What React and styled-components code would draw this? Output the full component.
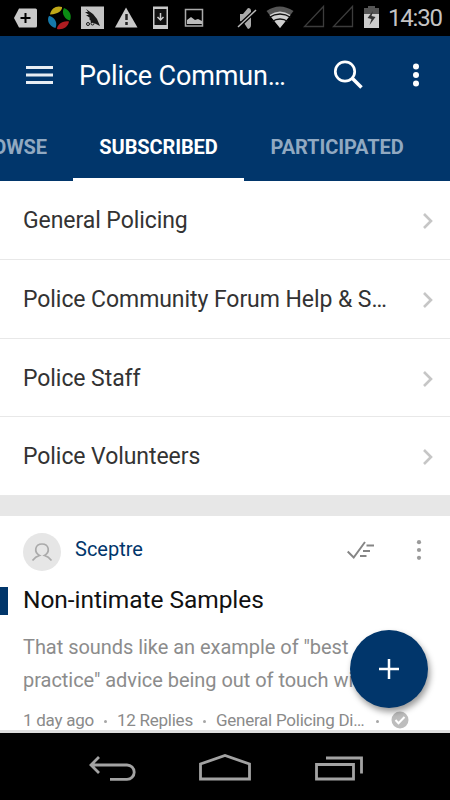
import React from "react"
import styled, { createGlobalStyle } from "styled-components"

const forums = [
  "General Policing",
  "Police Community Forum Help & S…",
  "Police Staff",
  "Police Volunteers",
]

function StatusIcons() {
  return (
    <svg width="386" height="36" viewBox="0 0 386 36">
      <path d="M19 8.500h16.500q1.500 0 1.500 1.500v16q0 1.500-1.500 1.500H19l-5-9.500z" fill="#c9c9c9" />
      <path d="M20.500 18h10M25.500 13v10" stroke="#000" strokeWidth="2" />
      <path d="M50 14.500C51 8 57 5 62 7C62.500 10 59 14 50 14.500z" fill="#c0a818" />
      <path d="M64 8C70 10 72 16 70 20.500C66 20 60.500 14 64 8z" fill="#0c8c14" />
      <path d="M69 21.500C68 27 63 30 57 29C57 25 62 20.500 69 21.500z" fill="#ae1c20" />
      <path d="M55.500 28C49 26.500 46.500 20 49 16C52.500 16 58.500 21 55.500 28z" fill="#1679aa" />
      <path d="M81 6.500h23v22.500H81z" fill="#c4c4c4" />
      <path
        d="M86 9l7 5 4 5 3 7-6-3-5-4 1-1-4-3 3 0-4-3 3 0zM90 18l6 4-5 1z"
        fill="#181818"
      />
      <g fill="none" stroke="#181818">
        <circle cx="88" cy="24" r="1.500" />
        <circle cx="92.500" cy="23.500" r="1.500" />
      </g>
      <path d="M126 7.500L137.500 27.500H115z" fill="#c9c9c9" />
      <path d="M126.500 14v6M126.500 22v3" stroke="#222" strokeWidth="2.500" />
      <path d="M153 6.500h15v22.500h-15z" fill="#c9c9c9" />
      <path d="M154.500 9h12v16h-12z" fill="#111" />
      <path d="M160.500 13v7M157.500 17l3 3 3-3" stroke="#ccc" strokeWidth="1.500" fill="none" />
      <path d="M185.500 9.500h17v16.500h-17z" fill="none" stroke="#aaa" strokeWidth="1.500" />
      <path d="M187 24v-4l4-3 4 3 3-1 4 2v3z" fill="#bbb" />
      <path d="M240 14h3l5-6q3 0 3 3v14q0 3-3 4l-4-6-4-2z" fill="#aaa" />
      <path d="M238 27l18-17" stroke="#000" strokeWidth="4" />
      <path d="M238 27l18-17" stroke="#bbb" strokeWidth="1.500" />
      <path d="M266.500 11q13-9 27 0l-13.500 17z" fill="#555" />
      <path d="M269.500 15q10.500-7 21 0L280 28z" fill="#d0d0d0" />
      <path d="M269 17.500q11-7 22 0M272 21.500q8-5 16 0" fill="none" stroke="#111" strokeWidth="1.300" />
      <path d="M304.500 26.500h19v-20zM333.500 26.500h19v-20z" fill="none" stroke="#3c3c3c" strokeWidth="1.300" />
      <path d="M364 8h4V6h7v2h4v6h-15z" fill="#555" />
      <path d="M364 14h15v14h-15z" fill="#ccc" />
      <path d="M373 11l-5.500 7 4 1-2 6 6-8-4-1z" fill="#333" />
    </svg>
  )
}

function MoreIcon({ color, r, gap }) {
  return (
    <svg width="10" height="28" viewBox="0 0 10 28" fill={color}>
      <circle cx="5" cy={14 - gap} r={r} />
      <circle cx="5" cy="14" r={r} />
      <circle cx="5" cy={14 + gap} r={r} />
    </svg>
  )
}

function App() {
  return (
    <Screen>
      <GlobalStyle />
      <StatusBar>
        <StatusIcons />
        <Clock>14:30</Clock>
      </StatusBar>
      <Header>
        <Toolbar>
          <svg width="27" height="20" viewBox="0 0 27 20">
            <path d="M0 2.500h27M0 10h27M0 17.500h27" stroke="#e8edf3" strokeWidth="2.800" />
          </svg>
          <AppTitle>Police Commun…</AppTitle>
          <svg width="30" height="30" viewBox="0 0 30 30" fill="none" stroke="#fff">
            <circle cx="12" cy="11.500" r="9.700" strokeWidth="2.700" />
            <path d="M19 18L28.500 27.500" strokeWidth="3.500" />
          </svg>
          <MoreIcon color="#fff" r={3} gap={8.5} />
        </Toolbar>
        <Tabs>
          <Tab $width={73} $end>BROWSE</Tab>
          <Tab $width={171} $active>SUBSCRIBED</Tab>
          <Tab $width={186}>PARTICIPATED</Tab>
        </Tabs>
      </Header>
      <ForumList>
        {forums.map((name) => (
          <ForumRow key={name}>
            <ForumName>{name}</ForumName>
            <svg width="12" height="18" viewBox="0 0 12 18">
              <path d="M2 2l7 7-7 7" fill="none" stroke="#c6c6c6" strokeWidth="2.600" />
            </svg>
          </ForumRow>
        ))}
      </ForumList>
      <Divider />
      <Topic>
        <TopicHeader>
          <Avatar>
            <svg width="22" height="20" viewBox="0 0 22 20" fill="none" stroke="#aaa" strokeWidth="1.700">
              <path d="M1.500 18.500Q4.500 14.500 8.500 13.500C2.500 10 4 2 11 2S19.500 10 13.500 13.500Q17.500 14.500 20.500 18.500" />
            </svg>
          </Avatar>
          <Author>Sceptre</Author>
          <svg width="28" height="20" viewBox="0 0 28 20" fill="none" stroke="#858585" strokeWidth="2">
            <path d="M.7 11.500l6 6L18 2" />
            <path d="M19.500 5.500h7.500M16 11h7M13 16h6.500" />
          </svg>
          <MoreIcon color="#9b9b9b" r={2.1} gap={7.8} />
        </TopicHeader>
        <TitleRow>
          <UnreadMark />
          <TopicTitle>Non-intimate Samples</TopicTitle>
        </TitleRow>
        <Excerpt>
          That sounds like an example of "best
          <br />
          practice" advice being out of touch with
        </Excerpt>
        <Meta>
          <span>1 day ago</span>
          <Dot />
          <span>12 Replies</span>
          <Dot />
          <span>General Policing Di…</span>
          <Dot $wide />
          <svg width="18" height="18" viewBox="0 0 18 18">
            <circle cx="9" cy="9" r="8.500" fill="#bdbdbd" />
            <path d="M4.500 9l3 3.200 6-6.200" fill="none" stroke="#fff" strokeWidth="2" />
          </svg>
        </Meta>
        <AddButton>
          <svg width="20" height="20" viewBox="0 0 20 20">
            <path d="M0 10h20M10 0v20" stroke="#fff" strokeWidth="2.500" />
          </svg>
        </AddButton>
      </Topic>
      <NavBar>
        <svg width="450" height="67" viewBox="0 0 450 67" fill="none" stroke="#a3a3a3" strokeWidth="2.800">
          <path d="M99 24L91 32l8 8M91 32h36a7.200 7.200 0 0 1 0 14.400h-17" />
          <path d="M200.500 46V31L225 22.500 249.500 31V46z" />
          <path d="M316.500 31.500h37v14.500h-37zM326 25h35.500v15.500" />
        </svg>
      </NavBar>
    </Screen>
  )
}

export default App

const navy = "#01366b"

const GlobalStyle = createGlobalStyle`
  * {
    box-sizing: border-box;
  }

  body {
    margin: 0;
    background: #fff;
    font-family: Roboto, sans-serif;
  }

  svg {
    display: block;
    flex-shrink: 0;
  }
`

const Screen = styled.div`
  width: 450px;
  height: 800px;
  overflow: hidden;
  display: flex;
  flex-direction: column;
`

const StatusBar = styled.div`
  height: 36px;
  flex-shrink: 0;
  display: flex;
  background: #000;
`

const Clock = styled.div`
  color: #c4c4c4;
  font-size: 24px;
  line-height: 37px;
  padding-left: 2px;
  letter-spacing: -1.2px;
`

const Header = styled.header`
  height: 145px;
  flex-shrink: 0;
  background: ${navy};
`

const Toolbar = styled.div`
  height: 77px;
  padding: 0 29px 0 26px;
  display: flex;
  align-items: center;
`

const AppTitle = styled.div`
  flex: 1;
  padding: 2px 0 0 26px;
  color: #fff;
  font-size: 27px;
  line-height: 36px;
  letter-spacing: -0.15px;
  white-space: nowrap;

  & + svg {
    margin-right: 48px;
  }
`

const Tabs = styled.div`
  height: 68px;
  display: flex;
`

const Tab = styled.div`
  width: ${(props) => props.$width}px;
  flex-shrink: 0;
  display: flex;
  justify-content: ${(props) => (props.$end ? "flex-end" : "center")};
  padding: 21px ${(props) => (props.$end ? 26 : 0)}px 0 0;
  color: ${(props) => (props.$active ? "#fff" : "#91a9c1")};
  border-bottom: 3px solid ${(props) => (props.$active ? "#fff" : "transparent")};
  font-size: 20px;
  font-weight: 700;
  line-height: 27px;
  letter-spacing: -0.1px;
`

const ForumList = styled.div`
  height: 315px;
  flex-shrink: 0;
  display: grid;
  grid-template-rows: repeat(4, 1fr);
`

const ForumRow = styled.div`
  display: flex;
  align-items: center;
  justify-content: space-between;
  padding: 2.5px 16px 0 23px;
  border-bottom: 1px solid #e8e8e8;

  &:last-child {
    padding-top: 1px;
  }
`

const ForumName = styled.div`
  color: #333;
  font-size: 23px;
  line-height: 30px;
  letter-spacing: -0.07px;
  white-space: nowrap;
`

const Divider = styled.div`
  height: 20px;
  flex-shrink: 0;
  background: #e7e7e7;
`

const Topic = styled.article`
  position: relative;
  height: 217px;
  flex-shrink: 0;
  padding-top: 14px;
  border-bottom: 3px solid #dedede;
`

const TopicHeader = styled.div`
  height: 44px;
  padding: 0 26px 0 23px;
  display: flex;
  align-items: center;

  > svg {
    margin-top: -4px;
  }

  > svg:last-child {
    margin-left: 39px;
  }
`

const Avatar = styled.div`
  width: 38px;
  height: 38px;
  border-radius: 50%;
  background: #e6e6e6;
  display: grid;
  place-items: center;
`

const Author = styled.div`
  flex: 1;
  padding: 0 0 7px 14px;
  color: ${navy};
  font-size: 20px;
  line-height: 24px;
`

const TitleRow = styled.div`
  height: 52px;
  display: flex;
  align-items: center;
`

const UnreadMark = styled.div`
  width: 8px;
  height: 28px;
  margin-top: 2px;
  background: ${navy};
`

const TopicTitle = styled.h2`
  margin: 0;
  padding-left: 15px;
  color: #111;
  font-size: 24.5px;
  font-weight: 400;
  line-height: 32px;
  letter-spacing: -0.05px;
`

const Excerpt = styled.p`
  margin: 5px 0 0;
  padding-left: 23px;
  color: #8c8c8c;
  font-size: 20px;
  line-height: 33px;
  letter-spacing: -0.04px;
  white-space: nowrap;
`

const Meta = styled.div`
  height: 26px;
  margin-top: 10px;
  padding-left: 23px;
  display: flex;
  align-items: center;
  color: #8a8a8a;
  font-size: 17px;
  line-height: 22px;
  letter-spacing: -0.25px;
  white-space: nowrap;
`

const Dot = styled.i`
  width: 3px;
  height: 3px;
  margin: 2px ${(props) => (props.$wide ? 12 : 10)}px 0;
  border-radius: 50%;
  background: #a6a6a6;
`

const AddButton = styled.div`
  position: absolute;
  top: 113.5px;
  left: 350px;
  width: 78px;
  height: 78px;
  border-radius: 50%;
  background: ${navy};
  box-shadow: 2px 4px 6px rgba(0, 0, 0, 0.4);
  display: grid;
  place-items: center;
`

const NavBar = styled.nav`
  height: 67px;
  flex-shrink: 0;
  background: #000;
`
